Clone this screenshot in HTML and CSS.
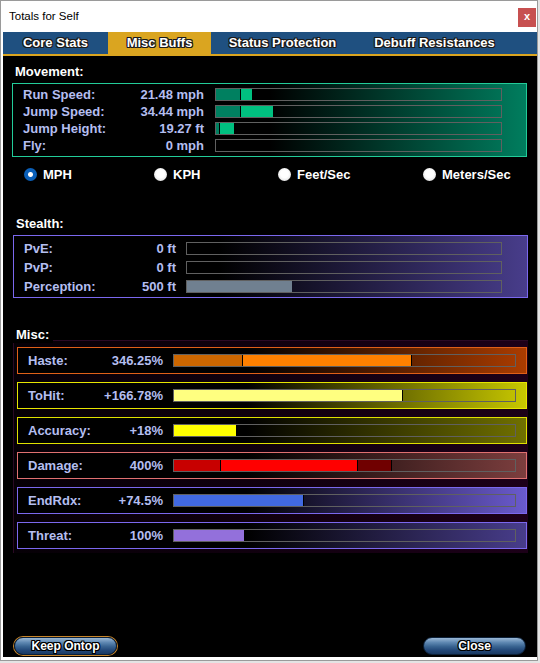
FILE: index.html
```html
<!DOCTYPE html>
<html>
<head>
<meta charset="utf-8">
<title>Totals for Self</title>
<link rel="stylesheet" href="styles.css">
</head>
<body>
<div class="window">
  <div class="titlebar">
    <span class="title">Totals for Self</span>
    <span class="close-x">x</span>
  </div>
  <div class="tabs">
    <div class="tab t1">Core Stats</div>
    <div class="tab t2 active">Misc Buffs</div>
    <div class="tab t3">Status Protection</div>
    <div class="tab t4">Debuff Resistances</div>
  </div>
  <div class="panel">
    <div class="hdr hdr-move">Movement:</div>
    <div class="box move">
      <div class="row"><span class="lbl">Run Speed:</span><span class="val">21.48 mph</span>
        <div class="bar"><i class="seg g-dark tick" style="width:24px"></i><i class="seg g-bright" style="width:11px"></i></div></div>
      <div class="row"><span class="lbl">Jump Speed:</span><span class="val">34.44 mph</span>
        <div class="bar"><i class="seg g-dark tick" style="width:24px"></i><i class="seg g-bright" style="width:32px"></i></div></div>
      <div class="row"><span class="lbl">Jump Height:</span><span class="val">19.27 ft</span>
        <div class="bar"><i class="seg g-dark tick" style="width:3px"></i><i class="seg g-bright" style="width:14px"></i></div></div>
      <div class="row"><span class="lbl">Fly:</span><span class="val">0 mph</span>
        <div class="bar"></div></div>
    </div>

    <div class="units">
      <label class="unit"><span class="radio on"></span><span class="ulbl">MPH</span></label>
      <label class="unit"><span class="radio"></span><span class="ulbl">KPH</span></label>
      <label class="unit"><span class="radio"></span><span class="ulbl">Feet/Sec</span></label>
      <label class="unit"><span class="radio"></span><span class="ulbl">Meters/Sec</span></label>
    </div>

    <div class="hdr hdr-stealth">Stealth:</div>
    <div class="box stealth">
      <div class="row"><span class="lbl">PvE:</span><span class="val">0 ft</span><div class="bar"></div></div>
      <div class="row"><span class="lbl">PvP:</span><span class="val">0 ft</span><div class="bar"></div></div>
      <div class="row"><span class="lbl">Perception:</span><span class="val">500 ft</span>
        <div class="bar"><i class="seg slate" style="width:105px"></i></div></div>
    </div>

    <div class="hdr hdr-misc">Misc:</div>
    <div class="misc">
      <div class="mbox haste"><span class="lbl">Haste:</span><span class="val">346.25%</span>
        <div class="bar"><i class="seg o-dark tick" style="width:68px"></i><i class="seg o-bright tick" style="width:168px"></i></div></div>
      <div class="mbox tohit"><span class="lbl">ToHit:</span><span class="val">+166.78%</span>
        <div class="bar"><i class="seg y-light tick" style="width:228px"></i></div></div>
      <div class="mbox accuracy"><span class="lbl">Accuracy:</span><span class="val">+18%</span>
        <div class="bar"><i class="seg y-full" style="width:62px"></i></div></div>
      <div class="mbox damage"><span class="lbl">Damage:</span><span class="val">400%</span>
        <div class="bar"><i class="seg r-dark tick" style="width:46px"></i><i class="seg r-bright tick" style="width:136px"></i><i class="seg r-deep tick" style="width:33px"></i></div></div>
      <div class="mbox endrdx"><span class="lbl">EndRdx:</span><span class="val">+74.5%</span>
        <div class="bar"><i class="seg blue tick" style="width:129px"></i></div></div>
      <div class="mbox threat"><span class="lbl">Threat:</span><span class="val">100%</span>
        <div class="bar"><i class="seg purple" style="width:70px"></i></div></div>
    </div>

    <div class="buttons">
      <div class="btn glow">Keep Ontop</div>
      <div class="btn">Close</div>
    </div>
  </div>
</div>
</body>
</html>
```

FILE: styles.css
```css
* { box-sizing: border-box; margin: 0; padding: 0; }
html, body { width: 540px; height: 663px; }
body {
  background: #e4e4e4;
  font-family: "Liberation Sans", Arial, sans-serif;
  overflow: hidden;
}
.window {
  width: 538px;
  height: 661px;
  background: #fff;
  border: 1px solid #9a9a9a;
  display: flex;
  flex-direction: column;
}
.titlebar {
  height: 31px;
  display: flex;
  align-items: flex-start;
  flex: none;
}
.title {
  font-size: 11.5px;
  line-height: 14px;
  color: #000;
  margin: 8px 0 0 8px;
}
.close-x {
  margin: 7px 1px 0 auto;
  width: 18px;
  height: 19px;
  background: #c75050;
  color: #fff;
  font-size: 11px;
  font-weight: bold;
  display: flex;
  align-items: center;
  justify-content: center;
  line-height: 1;
  padding-bottom: 2px;
}
.tabs {
  margin-left: 2px;
  width: 534px;
  height: 24px;
  flex: none;
  background: #1f5080;
  border-bottom: 2px solid #daa520;
  display: flex;
}
.tab {
  height: 22px;
  line-height: 22px;
  text-align: center;
  color: #fff;
  font-weight: bold;
  font-size: 13px;
  text-shadow: 1px 0 #1a1a1a, -1px 0 #1a1a1a, 0 1px #1a1a1a, 0 -1px #1a1a1a,
               1px 1px #1a1a1a, -1px -1px #1a1a1a, 1px -1px #1a1a1a, -1px 1px #1a1a1a;
}
.t1 { width: 105px; }
.t2 { width: 103px; }
.t3 { width: 143px; }
.t4 { width: 161px; }
.tab.active { background: #daa520; }

.panel {
  margin-left: 2px;
  width: 534px;
  height: 601px;
  flex: none;
  background: #000;
  display: flex;
  flex-direction: column;
}
.hdr {
  font-size: 13px;
  font-weight: bold;
  color: #fff;
  line-height: 16px;
  height: 16px;
}
.hdr-move { margin: 8px 0 0 12px; }
.hdr-stealth { margin: 34px 0 0 13px; }
.hdr-misc {
  margin: 29px 0 0 10px;
  padding: 0 4px 0 3px;
  width: fit-content;
  background: #000;
  position: relative;
  z-index: 1;
}

.lbl, .val {
  color: #b4bef0;
  font-weight: bold;
  font-size: 13px;
  white-space: nowrap;
  flex: none;
}
.val { text-align: right; }

.bar {
  height: 13px;
  border: 1px solid #606060;
  display: flex;
  flex: none;
}
.seg {
  display: block;
  height: 100%;
  flex: none;
  box-sizing: content-box;
}
.tick { border-right: 1px solid #000; }

.box { flex: none; }
.move {
  margin: 3px 0 0 9px;
  width: 515px;
  height: 74px;
  border: 1px solid #22cc99;
  padding: 2px 0;
  background: linear-gradient(to right, #000 50%, #007d5e 100%);
}
.move .row { height: 17px; display: flex; align-items: center; padding-left: 10px; }
.move .lbl { width: 110px; }
.move .val { width: 71px; }
.move .bar { margin-left: 11px; width: 287px; }
.g-dark { background: #008060; }
.g-bright { background: #00c080; }

.units {
  margin: 10px 0 0 21px;
  height: 15px;
  display: grid;
  grid-template-columns: 130px 124px 145px auto;
  flex: none;
}
.unit { display: flex; align-items: center; gap: 6px; }
.radio {
  width: 13px;
  height: 13px;
  border-radius: 50%;
  flex: none;
  background: radial-gradient(circle at 50% 45%, #fff 0, #fff 40%, #ececec 65%, #c4c4c4 100%);
}
.radio.on {
  background: radial-gradient(circle, #fff 0, #fff 2px, #0a5fb8 3px, #0a5fb8 100%);
}
.ulbl { color: #fff; font-weight: bold; font-size: 13px; line-height: 15px; }

.stealth {
  margin: 3px 0 0 10px;
  width: 515px;
  height: 63px;
  border: 1px solid #7b68ee;
  padding: 3px 0 1px;
  background: linear-gradient(to right, #000 40%, #483d8b 100%);
}
.stealth .row { height: 19px; display: flex; align-items: center; padding-left: 10px; }
.stealth .lbl { width: 100px; }
.stealth .val { width: 52px; }
.stealth .bar { margin-left: 10px; width: 316px; }
.slate { background: #708090; }

.misc {
  margin: -3px 0 0 10px;
  width: 515px;
  height: 213px;
  flex: none;
  border-top: 1px solid #2a0a24;
  border-left: 1px solid #2a0a24;
  padding: 6px 1px 4px 3px;
  display: flex;
  flex-direction: column;
  gap: 8px;
  background: linear-gradient(to right, #060006 0%, #1c0018 100%);
}
.mbox {
  height: 27px;
  flex: none;
  border: 1px solid;
  display: flex;
  align-items: center;
  padding-left: 10px;
}
.mbox .lbl { width: 70px; }
.mbox .val { width: 65px; }
.mbox .bar { margin-left: 10px; width: 343px; }

.haste { border-color: #e06018; background: linear-gradient(to right, #000 45%, #aa3c00 100%); }
.tohit { border-color: #e6e600; background: linear-gradient(to right, #000 45%, #c8c800 100%); }
.accuracy { border-color: #e0e000; background: linear-gradient(to right, #000 45%, #707000 100%); }
.damage { border-color: #e07070; background: linear-gradient(to right, #000 45%, #7c3e3e 100%); }
.endrdx { border-color: #7b68ee; background: linear-gradient(to right, #000 45%, #6a5acd 100%); }
.threat { border-color: #7b68ee; background: linear-gradient(to right, #000 45%, #483d8b 100%); }

.o-dark { background: #cc6600; }
.o-bright { background: #ff8000; }
.y-light { background: #ffff80; }
.y-full { background: #ffff00; }
.r-dark { background: #c80000; }
.r-bright { background: #ff0000; }
.r-deep { background: #700000; }
.blue { background: #4169e1; }
.purple { background: #9370db; }

.buttons {
  margin-top: auto;
  padding: 0 11px 2px 11px;
  display: flex;
  justify-content: space-between;
  flex: none;
}
.btn {
  width: 103px;
  height: 18px;
  border-radius: 9px;
  border: 1px solid #0c2038;
  background: linear-gradient(to bottom, #9ab8d6 0%, #5f88b2 28%, #3a6592 52%, #24497a 75%, #1a3a62 100%);
  color: #fff;
  font-weight: bold;
  font-size: 12px;
  line-height: 16px;
  text-align: center;
  text-shadow: 1px 0 #000, -1px 0 #000, 0 1px #000, 0 -1px #000,
               1px 1px #000, -1px -1px #000, 1px -1px #000, -1px 1px #000;
}
.btn.glow { box-shadow: 0 0 0 1px #c8862a; }
```
